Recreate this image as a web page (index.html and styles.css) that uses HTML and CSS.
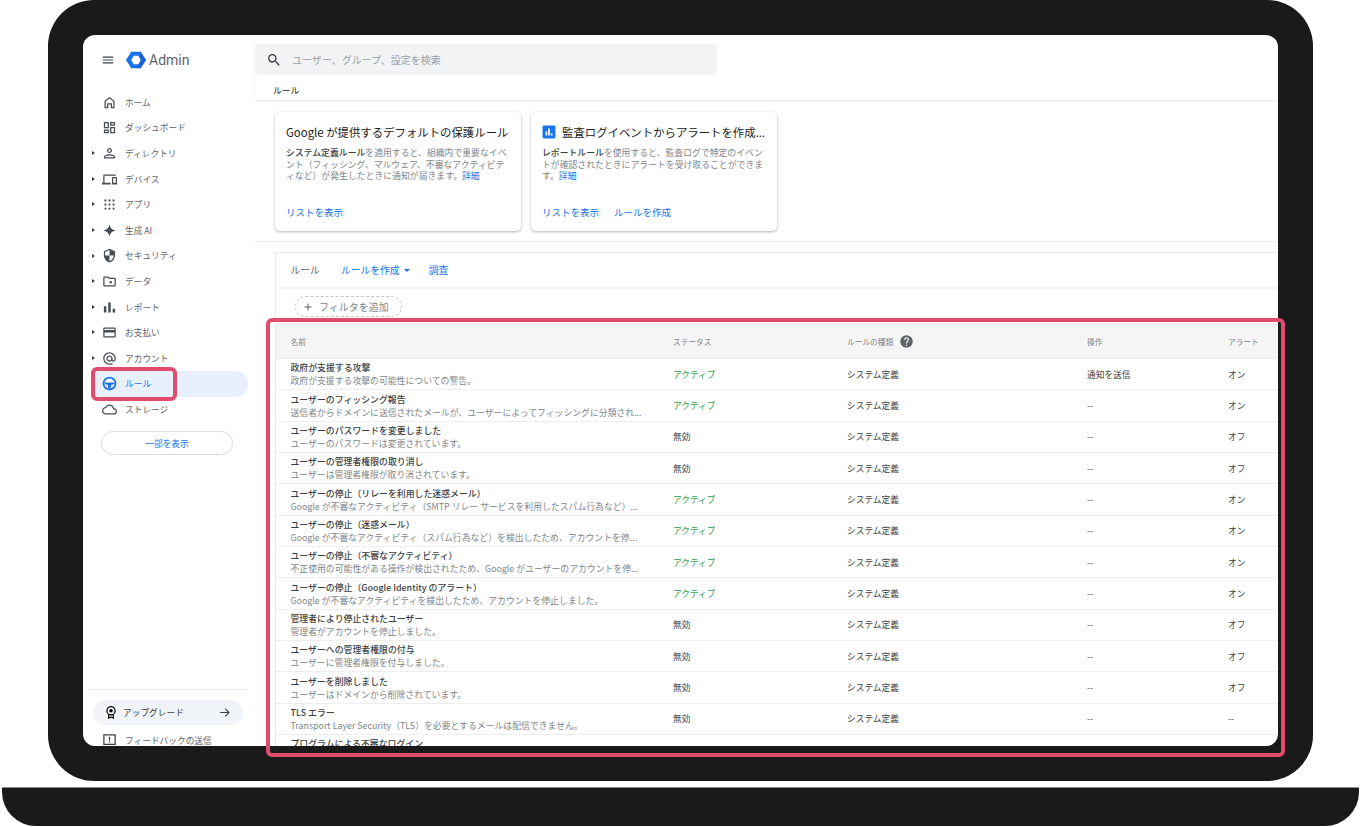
FILE: index.html
```html
<!DOCTYPE html>
<html lang="ja">
<head>
<meta charset="UTF-8">
<meta name="viewport" content="width=device-width, initial-scale=1.0">
<title>Admin - ルール</title>
<link rel="stylesheet" href="styles.css">
</head>
<body>
<div class="laptop">
  <div class="lid">
    <div class="screen">

      <aside class="sidebar">
        <div class="brand">
          <svg class="menu-icon" viewBox="0 0 24 24"><path d="M3 18h18v-2H3v2zm0-5h18v-2H3v2zm0-7v2h18V6H3z"/></svg>
          <svg class="logo" viewBox="0 0 24 24"><path fill="#1a73e8" d="M6.3 2h11.4L24 12l-6.3 10H6.3L0 12z"/><path fill="#1558c0" d="M17.700 2 24 12l-6.300 10H12l5-10z" opacity=".55"/><path fill="#fff" d="M9.200 7h5.600l2.900 5-2.900 5H9.200l-2.900-5z"/></svg>
          <span class="brand-name">Admin</span>
        </div>
        <nav class="nav">
          <a class="nav-item"><svg class="nav-icon" viewBox="0 0 24 24"><path d="M12 3 4 9.500V21h6v-6h4v6h6V9.500zm6 16h-2v-6H8v6H6v-8.500l6-5 6 5z"/></svg>ホーム</a>
          <a class="nav-item"><svg class="nav-icon" viewBox="0 0 24 24"><path d="M19 5v2h-4V5h4M9 5v6H5V5h4m10 8v6h-4v-6h4M9 17v2H5v-2h4M21 3h-8v6h8V3zM11 3H3v10h8V3zm10 8h-8v10h8V11zm-10 4H3v6h8v-6z"/></svg>ダッシュボード</a>
          <a class="nav-item more"><svg class="nav-icon" viewBox="0 0 24 24"><path d="M12 5c1.100 0 2 .9 2 2s-.9 2-2 2-2-.9-2-2 .9-2 2-2m0-2C9.790 3 8 4.790 8 7s1.790 4 4 4 4-1.790 4-4-1.790-4-4-4zm0 10c-3 0-9 1.340-9 4v3h18v-3c0-2.660-6-4-9-4zm7 5H5v-1c.2-.7 4-2 7-2s6.800 1.300 7 2z"/></svg>ディレクトリ</a>
          <a class="nav-item more"><svg class="nav-icon" viewBox="0 0 24 24"><path d="M4 6h18V4H4c-1.100 0-2 .9-2 2v11H0v3h14v-3H4V6zm19 2h-6c-.55 0-1 .45-1 1v10c0 .55.45 1 1 1h6c.55 0 1-.45 1-1V9c0-.55-.45-1-1-1zm-1 9h-4v-7h4v7z"/></svg>デバイス</a>
          <a class="nav-item more"><svg class="nav-icon" viewBox="0 0 24 24"><path d="M4 4h3v3H4zm6.500 0h3v3h-3zM17 4h3v3h-3zM4 10.500h3v3H4zm6.500 0h3v3h-3zm6.500 0h3v3h-3zM4 17h3v3H4zm6.500 0h3v3h-3zm6.500 0h3v3h-3z"/></svg>アプリ</a>
          <a class="nav-item more"><svg class="nav-icon" viewBox="0 0 24 24"><path d="M12 2c.8 6 4 9.200 10 10-6 .8-9.200 4-10 10-.8-6-4-9.200-10-10 6-.8 9.200-4 10-10z"/></svg>生成 AI</a>
          <a class="nav-item more"><svg class="nav-icon" viewBox="0 0 24 24"><path d="M12 1 3 5v6c0 5.550 3.840 10.740 9 12 5.160-1.260 9-6.450 9-12V5l-9-4zm0 10.990h7c-.53 4.120-3.280 7.790-7 8.940V12H5V6.300l7-3.110v8.800z"/></svg>セキュリティ</a>
          <a class="nav-item more"><svg class="nav-icon" viewBox="0 0 24 24"><path d="M20 6h-8l-2-2H4c-1.100 0-2 .9-2 2v12c0 1.100.9 2 2 2h16c1.100 0 2-.9 2-2V8c0-1.100-.9-2-2-2zm0 12H4V6h5.170l2 2H20v10z"/><circle cx="14" cy="13" r="2"/></svg>データ</a>
          <a class="nav-item more"><svg class="nav-icon" viewBox="0 0 24 24"><path d="M3 10h4v10H3zm7-6h4v16h-4zm7 10h4v6h-4z"/></svg>レポート</a>
          <a class="nav-item more"><svg class="nav-icon" viewBox="0 0 24 24"><path d="M20 4H4c-1.110 0-1.990.89-1.990 2L2 18c0 1.110.89 2 2 2h16c1.110 0 2-.89 2-2V6c0-1.110-.89-2-2-2zm0 14H4v-6h16v6zm0-10H4V6h16v2z"/></svg>お支払い</a>
          <a class="nav-item more"><svg class="nav-icon" viewBox="0 0 24 24"><path d="M12 2C6.480 2 2 6.480 2 12s4.480 10 10 10h5v-2h-5c-4.340 0-8-3.660-8-8s3.660-8 8-8 8 3.660 8 8v1.430c0 .79-.71 1.570-1.500 1.570s-1.500-.78-1.500-1.570V12c0-2.760-2.240-5-5-5s-5 2.240-5 5 2.240 5 5 5c1.380 0 2.640-.56 3.540-1.470.65.89 1.770 1.470 2.960 1.470 1.970 0 3.500-1.600 3.500-3.570V12c0-5.520-4.480-10-10-10zm0 13c-1.660 0-3-1.340-3-3s1.340-3 3-3 3 1.340 3 3-1.340 3-3 3z"/></svg>アカウント</a>
          <a class="nav-item active"><svg class="nav-icon" viewBox="0 0 24 24"><circle cx="12" cy="12" r="11" fill="#1a73e8"/><circle cx="12" cy="12" r="8" fill="#fff"/><path fill="#1a73e8" d="M4.500 10.500h15V13l-4.500 1-1 5.500h-4L9 14l-4.500-1z"/></svg>ルール</a>
          <a class="nav-item"><svg class="nav-icon" viewBox="0 0 24 24"><path d="M19.350 10.040C18.670 6.590 15.640 4 12 4 9.110 4 6.600 5.640 5.350 8.040 2.340 8.360 0 10.910 0 14c0 3.310 2.690 6 6 6h13c2.760 0 5-2.240 5-5 0-2.640-2.050-4.780-4.650-4.960zM19 18H6c-2.210 0-4-1.790-4-4 0-2.050 1.530-3.760 3.560-3.970l1.070-.11.5-.95C8.080 7.140 9.940 6 12 6c2.620 0 4.880 1.860 5.390 4.430l.3 1.500 1.530.11c1.560.1 2.780 1.410 2.780 2.960 0 1.650-1.350 3-3 3z"/></svg>ストレージ</a>
        </nav>
        <button class="show-less">一部を表示</button>
        <div class="side-foot">
          <div class="upgrade">
            <svg class="upgrade-icon" viewBox="0 0 24 24"><path d="M12 1a8 8 0 0 0-5 14.200V23l5-2 5 2v-7.800A8 8 0 0 0 12 1zm0 2a6 6 0 1 1 0 12 6 6 0 0 1 0-12zm0 3a3 3 0 1 0 0 6 3 3 0 0 0 0-6zm-3 10.500a8 8 0 0 0 6 0v3.500l-3-1-3 1z"/></svg>
            <span class="upgrade-label">アップグレード</span>
            <svg class="arrow-icon" viewBox="0 0 24 24"><path d="m12 4-1.410 1.410L16.170 11H2v2h14.170l-5.580 5.590L12 20l8-8z"/></svg>
          </div>
          <a class="feedback"><svg class="nav-icon feedback-icon" viewBox="0 0 24 24"><path fill-rule="evenodd" d="M2 2h20v17H2zm2 2v13h16V4zM11 6h2v6h-2zm0 7h2v2h-2z"/></svg>フィードバックの送信</a>
        </div>
      </aside>

      <main class="main">
        <header class="topbar">
          <div class="search">
            <svg class="search-icon" viewBox="0 0 24 24"><path d="M15.500 14h-.79l-.28-.27A6.470 6.470 0 0 0 16 9.500 6.500 6.500 0 1 0 9.500 16c1.610 0 3.090-.59 4.230-1.570l.27.28v.79l5 4.990L20.490 19l-4.990-5zm-6 0C7.010 14 5 11.990 5 9.500S7.010 5 9.500 5 14 7.010 14 9.500 11.990 14 9.500 14z"/></svg>
            <span class="search-text">ユーザー、グループ、設定を検索</span>
          </div>
          <div class="crumb">ルール</div>
        </header>

        <section class="cards">
          <div class="card">
            <h3 class="card-title">Google が提供するデフォルトの保護ルール</h3>
            <p class="card-text"><b>システム定義ルール</b>を適用すると、組織内で重要なイベント（フィッシング、マルウェア、不審なアクティビティなど）が発生したときに通知が届きます。<a class="link">詳細</a></p>
            <div class="card-links"><a class="link">リストを表示</a></div>
          </div>
          <div class="card">
            <h3 class="card-title"><svg class="report-icon" viewBox="0 0 24 24"><path fill="#1a73e8" d="M3 1h18a2 2 0 0 1 2 2v18a2 2 0 0 1-2 2H3a2 2 0 0 1-2-2V3a2 2 0 0 1 2-2z"/><path fill="#fff" d="M6 11h3v7H6zm4.500-5h3v12h-3zm4.500 8h3v4h-3z"/></svg><span class="card-title-text">監査ログイベントからアラートを作成...</span></h3>
            <p class="card-text"><b>レポートルール</b>を使用すると、監査ログで特定のイベントが確認されたときにアラートを受け取ることができます。<a class="link">詳細</a></p>
            <div class="card-links"><a class="link">リストを表示</a><a class="link">ルールを作成</a></div>
          </div>
        </section>

        <section class="rules">
          <div class="rules-bar">
            <span class="rules-title">ルール</span>
            <a class="bar-link">ルールを作成<i class="caret"></i></a>
            <a class="bar-link">調査</a>
          </div>
          <div class="filter-row">
            <span class="filter"><svg class="plus-icon" viewBox="0 0 24 24"><path d="M19 13h-6v6h-2v-6H5v-2h6V5h2v6h6v2z"/></svg>フィルタを追加</span>
          </div>

          <div class="table">
            <div class="row head">
              <div class="col-name">名前</div>
              <div class="col-status">ステータス</div>
              <div class="col-type">ルールの種類<svg class="help-icon" viewBox="0 0 24 24"><path d="M12 2a10 10 0 1 0 0 20 10 10 0 0 0 0-20zm1 17h-2v-2h2zm2.100-7.700-.9.9c-.7.7-1.200 1.300-1.200 2.800h-2v-.5c0-1.100.5-2.100 1.200-2.800l1.200-1.300c.4-.3.600-.8.600-1.400a2 2 0 0 0-4 0H8a4 4 0 0 1 8 0c0 .9-.4 1.700-.9 2.300z"/></svg></div>
              <div class="col-action">操作</div>
              <div class="col-alert">アラート</div>
            </div>
            <div class="row">
              <div class="col-name"><div class="rule-name">政府が支援する攻撃</div><div class="rule-desc">政府が支援する攻撃の可能性についての警告。</div></div>
              <div class="col-status on">アクティブ</div><div class="col-type">システム定義</div><div class="col-action">通知を送信</div><div class="col-alert">オン</div>
            </div>
            <div class="row">
              <div class="col-name"><div class="rule-name">ユーザーのフィッシング報告</div><div class="rule-desc">送信者からドメインに送信されたメールが、ユーザーによってフィッシングに分類され...</div></div>
              <div class="col-status on">アクティブ</div><div class="col-type">システム定義</div><div class="col-action">--</div><div class="col-alert">オン</div>
            </div>
            <div class="row">
              <div class="col-name"><div class="rule-name">ユーザーのパスワードを変更しました</div><div class="rule-desc">ユーザーのパスワードは変更されています。</div></div>
              <div class="col-status">無効</div><div class="col-type">システム定義</div><div class="col-action">--</div><div class="col-alert">オフ</div>
            </div>
            <div class="row">
              <div class="col-name"><div class="rule-name">ユーザーの管理者権限の取り消し</div><div class="rule-desc">ユーザーは管理者権限が取り消されています。</div></div>
              <div class="col-status">無効</div><div class="col-type">システム定義</div><div class="col-action">--</div><div class="col-alert">オフ</div>
            </div>
            <div class="row">
              <div class="col-name"><div class="rule-name">ユーザーの停止（リレーを利用した迷惑メール）</div><div class="rule-desc">Google が不審なアクティビティ（SMTP リレー サービスを利用したスパム行為など）...</div></div>
              <div class="col-status on">アクティブ</div><div class="col-type">システム定義</div><div class="col-action">--</div><div class="col-alert">オン</div>
            </div>
            <div class="row">
              <div class="col-name"><div class="rule-name">ユーザーの停止（迷惑メール）</div><div class="rule-desc">Google が不審なアクティビティ（スパム行為など）を検出したため、アカウントを停...</div></div>
              <div class="col-status on">アクティブ</div><div class="col-type">システム定義</div><div class="col-action">--</div><div class="col-alert">オン</div>
            </div>
            <div class="row">
              <div class="col-name"><div class="rule-name">ユーザーの停止（不審なアクティビティ）</div><div class="rule-desc">不正使用の可能性がある操作が検出されたため、Google がユーザーのアカウントを停...</div></div>
              <div class="col-status on">アクティブ</div><div class="col-type">システム定義</div><div class="col-action">--</div><div class="col-alert">オン</div>
            </div>
            <div class="row">
              <div class="col-name"><div class="rule-name">ユーザーの停止（Google Identity のアラート）</div><div class="rule-desc">Google が不審なアクティビティを検出したため、アカウントを停止しました。</div></div>
              <div class="col-status on">アクティブ</div><div class="col-type">システム定義</div><div class="col-action">--</div><div class="col-alert">オン</div>
            </div>
            <div class="row">
              <div class="col-name"><div class="rule-name">管理者により停止されたユーザー</div><div class="rule-desc">管理者がアカウントを停止しました。</div></div>
              <div class="col-status">無効</div><div class="col-type">システム定義</div><div class="col-action">--</div><div class="col-alert">オフ</div>
            </div>
            <div class="row">
              <div class="col-name"><div class="rule-name">ユーザーへの管理者権限の付与</div><div class="rule-desc">ユーザーに管理者権限を付与しました。</div></div>
              <div class="col-status">無効</div><div class="col-type">システム定義</div><div class="col-action">--</div><div class="col-alert">オフ</div>
            </div>
            <div class="row">
              <div class="col-name"><div class="rule-name">ユーザーを削除しました</div><div class="rule-desc">ユーザーはドメインから削除されています。</div></div>
              <div class="col-status">無効</div><div class="col-type">システム定義</div><div class="col-action">--</div><div class="col-alert">オフ</div>
            </div>
            <div class="row">
              <div class="col-name"><div class="rule-name">TLS エラー</div><div class="rule-desc">Transport Layer Security（TLS）を必要とするメールは配信できません。</div></div>
              <div class="col-status">無効</div><div class="col-type">システム定義</div><div class="col-action">--</div><div class="col-alert">--</div>
            </div>
            <div class="row">
              <div class="col-name"><div class="rule-name">プログラムによる不審なログイン</div><div class="rule-desc blank"></div></div>
            </div>
          </div>
        </section>
      </main>
    </div>

    <div class="mark mark-nav"></div>
    <div class="mark mark-table"></div>
  </div>
  <div class="base"></div>
</div>
</body>
</html>
```

FILE: styles.css
```css
* {
  box-sizing: border-box;
}
html, body {
  margin: 0;
  padding: 0;
  height: 827px;
  overflow: hidden;
  background: #fff;
}
body {
  font-family: "Noto Sans CJK JP", Roboto, sans-serif;
  font-size: 8.7px;
  color: #3c4043;
}
a {
  text-decoration: none;
}

/* laptop frame */
.laptop {
  padding: 0 2px;
}
.lid {
  position: relative;
  width: 1265px;
  height: 781px;
  margin-left: 46px;
  padding: 35px;
  background: #1a1a1a;
  border-radius: 46px;
}
.base {
  height: 39px;
  margin-top: 6px;
  background: #1a1a1a;
  border-top: 1px solid #8a8a8a;
  border-radius: 0 0 34px 34px;
}
.screen {
  display: flex;
  height: 711px;
  background: #fff;
  border-radius: 12px;
  overflow: hidden;
}

/* red highlights */
.mark {
  position: absolute;
  border: 4px solid #e14c6c;
  border-radius: 6px;
}
.mark-nav {
  left: 43px;
  top: 367px;
  width: 86px;
  height: 34px;
}
.mark-table {
  left: 218px;
  top: 318px;
  width: 1019px;
  height: 439px;
}

/* sidebar */
.sidebar {
  display: flex;
  flex-direction: column;
  flex: 0 0 172px;
  height: 711px;
}
.brand {
  display: flex;
  align-items: center;
  height: 49px;
  padding-left: 18px;
}
.menu-icon {
  width: 14px;
  height: 14px;
  fill: #3c4043;
}
.logo {
  width: 20px;
  height: 20px;
  margin-left: 11px;
}
.brand-name {
  margin-left: 3px;
  font-family: Roboto, sans-serif;
  font-size: 14px;
  color: #5f6368;
}
.nav {
  padding-top: 5.5px;
}
.nav-item {
  position: relative;
  display: flex;
  align-items: center;
  height: 25.6px;
  padding-left: 19px;
  color: #5f6368;
}
.nav-icon {
  flex: none;
  width: 15px;
  height: 15px;
  margin-right: 8px;
  fill: #4a4d51;
}
.more::before {
  content: "";
  position: absolute;
  left: 9px;
  top: 10.5px;
  border-left: 3px solid #3c4043;
  border-top: 2.5px solid transparent;
  border-bottom: 2.5px solid transparent;
}
.active {
  width: 157px;
  margin-left: 8px;
  padding-left: 11px;
  background: #e8f0fe;
  border-radius: 0 13px 13px 0;
  color: #1a73e8;
}
.show-less {
  width: 132px;
  height: 24px;
  margin: 9px 0 0 18px;
  padding: 0;
  background: #fff;
  border: 1px solid #dadce0;
  border-radius: 12px;
  font: inherit;
  color: #1a73e8;
}
.side-foot {
  height: 57px;
  margin: auto 7px 0 5px;
  padding: 10px 5px 0;
  border-top: 1px solid #e8eaed;
  overflow: hidden;
}
.upgrade {
  display: flex;
  align-items: center;
  height: 25px;
  padding: 0 11px 0 11px;
  background: #f0f4f9;
  border-radius: 13px;
  color: #3c4043;
}
.upgrade-icon {
  width: 14px;
  height: 17px;
  margin-right: 5px;
}
.upgrade-label {
  flex: 1;
}
.arrow-icon {
  width: 13px;
  height: 13px;
  fill: #3c4043;
}
.feedback {
  display: flex;
  align-items: center;
  margin-top: 8px;
  padding-left: 9px;
  color: #5f6368;
}
.feedback-icon {
  fill: #3c4043;
}

/* main column */
.main {
  flex: 1;
  min-width: 0;
}
.topbar {
  height: 65px;
  padding-top: 9px;
  box-shadow: 0 1px 2px rgba(60, 64, 67, .12);
}
.search {
  display: flex;
  align-items: center;
  width: 462px;
  height: 31px;
  padding-left: 11px;
  background: #f1f3f4;
  border-radius: 4px;
  font-size: 10px;
}
.search-icon {
  width: 16px;
  height: 16px;
  margin-right: 10px;
  fill: #3c4043;
}
.search-text {
  color: #9aa0a6;
}
.crumb {
  margin-top: 9px;
  padding-left: 18px;
  line-height: 14px;
  color: #202124;
}

/* info cards */
.cards {
  display: flex;
  gap: 10px;
  height: 142px;
  padding: 12px 0 0 20px;
  border-bottom: 1px solid #e8eaed;
}
.card {
  position: relative;
  width: 246px;
  height: 119px;
  padding: 10px 11px 0;
  background: #fff;
  border-radius: 5px;
  box-shadow: 0 1px 3px rgba(60, 64, 67, .4);
}
.card-title {
  display: flex;
  align-items: center;
  margin: 0;
  font-size: 11.4px;
  font-weight: 400;
  line-height: 20px;
  color: #202124;
  white-space: nowrap;
}
.report-icon {
  width: 14px;
  height: 14px;
  margin-right: 6px;
}
.card-text {
  margin: 5px 0 0;
  font-size: 8.85px;
  line-height: 11.5px;
  line-break: anywhere;
  color: #80868b;
}
.card-text b {
  font-weight: 500;
  color: #3c4043;
}
.link {
  color: #1a73e8;
}
.card-links {
  position: absolute;
  left: 11px;
  top: 93px;
  display: flex;
  gap: 15px;
  font-size: 9.5px;
  line-height: 14px;
}

/* rules list */
.rules {
  margin: 10px 0 0 20px;
  border-top: 1px solid #e8eaed;
  border-left: 1px solid #e8eaed;
}
.rules-bar {
  display: flex;
  align-items: center;
  height: 36px;
  padding-left: 14.5px;
  border-bottom: 2px solid #f1f3f4;
  font-size: 9.8px;
}
.rules-title {
  color: #5f6368;
  margin-right: 21px;
}
.bar-link {
  display: flex;
  align-items: center;
  margin-right: 19px;
  color: #1a73e8;
}
.caret {
  margin-left: 4px;
  border-top: 3px solid #1a73e8;
  border-left: 3.5px solid transparent;
  border-right: 3.5px solid transparent;
}
.filter-row {
  height: 34px;
  padding: 7px 0 0 19px;
}
.filter {
  display: inline-flex;
  align-items: center;
  width: 107px;
  height: 21px;
  padding-left: 6px;
  border: 1px dashed #c4c7c5;
  border-radius: 11px;
  font-size: 10px;
  color: #80868b;
}
.plus-icon {
  width: 12px;
  height: 12px;
  margin-right: 5px;
  fill: #5f6368;
}

/* table */
.table {
  border-top: 2px solid #eee;
}
.row {
  display: flex;
  align-items: center;
  height: 31.35px;
  padding-left: 14.5px;
  border-bottom: 1.5px solid #eee;
  color: #3c4043;
}
.head {
  height: 34px;
  background: #f5f5f5;
  color: #80868b;
  font-size: 7.7px;
}
.col-name {
  flex: 0 0 382.5px;
  overflow: hidden;
  white-space: nowrap;
}
.col-status {
  flex: 0 0 174px;
}
.col-type {
  display: flex;
  align-items: center;
  flex: 0 0 240px;
}
.col-action {
  flex: 0 0 141px;
}
.on {
  color: #2e9e4f;
}
.help-icon {
  width: 15px;
  height: 15px;
  margin-left: 6px;
  fill: #5f6368;
}
.rule-name {
  line-height: 13px;
  font-size: 8.9px;
  font-weight: 500;
  color: #3c4043;
}
.rule-desc {
  line-height: 13px;
  font-size: 8.85px;
  color: #80868b;
}
.blank {
  height: 13px;
}
```
